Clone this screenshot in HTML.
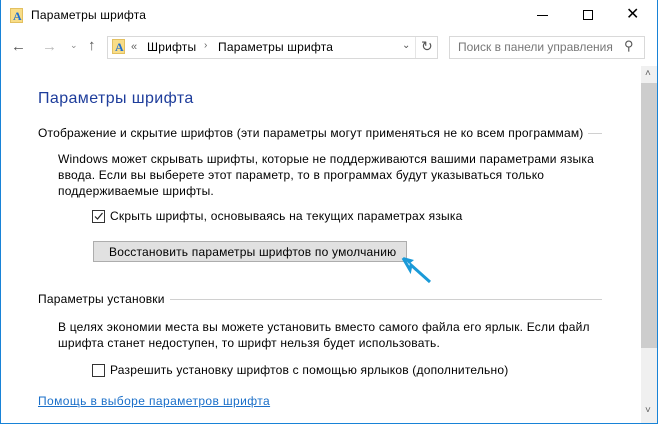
<!DOCTYPE html>
<html><head><meta charset="utf-8"><style>
*{margin:0;padding:0;box-sizing:border-box}
body{width:658px;height:424px;overflow:hidden;background:#fff;font-family:"Liberation Sans",sans-serif;font-size:12px;letter-spacing:0.2px;color:#000;position:relative}
.a{position:absolute;white-space:nowrap}
.frame{position:absolute;left:0;top:0;width:658px;height:424px;border:1px solid #1883d7;border-top:none;pointer-events:none}
.line{position:absolute;height:1px;background:#d0d0d0}
.cb{position:absolute;width:13px;height:13px;border:1px solid #333;background:#fff}
.ico{position:absolute;width:13px;height:15px;background:#f8dd88;border:1px solid #e3c060;letter-spacing:0}
.ico span{position:absolute;left:2px;top:0px;color:#1f6ed0;font:bold 12px "Liberation Serif",serif}
</style></head><body>
<div class="ico" style="left:10px;top:8px"><span>A</span></div>
<div class="a" style="left:31px;top:8px;font-size:12px">Параметры шрифта</div>
<div class="a" style="left:537px;top:15px;width:11px;height:1px;background:#000"></div>
<div class="a" style="left:583px;top:10px;width:10px;height:10px;border:1px solid #000"></div>
<div class="a" style="left:626px;top:4px;font-size:16px">✕</div>

<div class="a" style="left:11px;top:38px;font-size:15px;color:#555">←</div>
<div class="a" style="left:42px;top:38px;font-size:15px;color:#bbb">→</div>
<div class="a" style="left:70px;top:40px;font-size:9px;color:#888">⌄</div>
<div class="a" style="left:88px;top:37px;font-size:15px;color:#555">↑</div>
<div class="a" style="left:107px;top:36px;width:331px;height:23px;border:1px solid #d9d9d9"></div>
<div class="a" style="left:415px;top:37px;width:1px;height:21px;background:#e5e5e5"></div>
<div class="ico" style="left:112px;top:39px"><span>A</span></div>
<div class="a" style="left:131px;top:41px;color:#666;font-size:11px">«</div>
<div class="a" style="left:147px;top:40px">Шрифты</div>
<div class="a" style="left:204px;top:40px;color:#666;font-size:10px">›</div>
<div class="a" style="left:218px;top:40px">Параметры шрифта</div>
<div class="a" style="left:402px;top:40px;color:#555;font-size:10px">⌄</div>
<div class="a" style="left:421px;top:38px;color:#555;font-size:14px">↻</div>
<div class="a" style="left:449px;top:36px;width:196px;height:23px;border:1px solid #d9d9d9"></div>
<div class="a" style="left:458px;top:40px;color:#777;letter-spacing:0">Поиск в панели управления</div>
<div class="a" style="left:624px;top:38px;color:#555;font-size:13px">⚲</div>

<div class="a" style="left:641px;top:66px;width:16px;height:357px;background:#f0f0f0"></div>
<div class="a" style="left:641px;top:83px;width:16px;height:265px;background:#cdcdcd"></div>
<div class="a" style="left:645px;top:68px;font-size:10px;color:#606060">˄</div>
<div class="a" style="left:645px;top:405px;font-size:10px;color:#606060">˅</div>

<div class="a" style="left:38px;top:90px;font-size:16px;letter-spacing:0.4px;color:#1e3d9b">Параметры шрифта</div>
<div class="a" style="left:38px;top:126px">Отображение и скрытие шрифтов (эти параметры могут применяться не ко всем программам)</div>
<div class="line" style="left:588px;top:133px;width:14px"></div>
<div class="a" style="left:58px;top:151px;line-height:16px">Windows может скрывать шрифты, которые не поддерживаются вашими параметрами языка<br>ввода. Если вы выберете этот параметр, то в программах будут указываться только<br>поддерживаемые шрифты.</div>
<div class="cb" style="left:92px;top:210px"></div>
<svg class="a" style="left:92px;top:210px" width="13" height="13"><path d="M3 6.5 L5.5 9 L10.5 3" stroke="#222" stroke-width="1.2" fill="none"/></svg>
<div class="a" style="left:110px;top:209px">Скрыть шрифты, основываясь на текущих параметрах языка</div>
<div class="a" style="left:93px;top:241px;width:314px;height:21px;background:#e1e1e1;border:1px solid #adadad"></div>
<div class="a" style="left:109px;top:245px">Восстановить параметры шрифтов по умолчанию</div>
<svg class="a" style="left:400px;top:254px" width="40" height="32"><path d="M3 4 L10 16 L11 11 L30 28" stroke="#1a9ad8" stroke-width="3" fill="none"/><path d="M3 3 L14 6 L9 10 Z" fill="#1a9ad8"/></svg>

<div class="a" style="left:38px;top:292px">Параметры установки</div>
<div class="line" style="left:170px;top:299px;width:432px"></div>
<div class="a" style="left:58px;top:319px;line-height:16px">В целях экономии места вы можете установить вместо самого файла его ярлык. Если файл<br>шрифта станет недоступен, то шрифт нельзя будет использовать.</div>
<div class="cb" style="left:92px;top:364px"></div>
<div class="a" style="left:110px;top:363px">Разрешить установку шрифтов с помощью ярлыков (дополнительно)</div>
<div class="a" style="left:38px;top:394px;color:#1a6fc9;text-decoration:underline;letter-spacing:0.4px">Помощь в выборе параметров шрифта</div>
<div class="frame"></div>
</body></html>
